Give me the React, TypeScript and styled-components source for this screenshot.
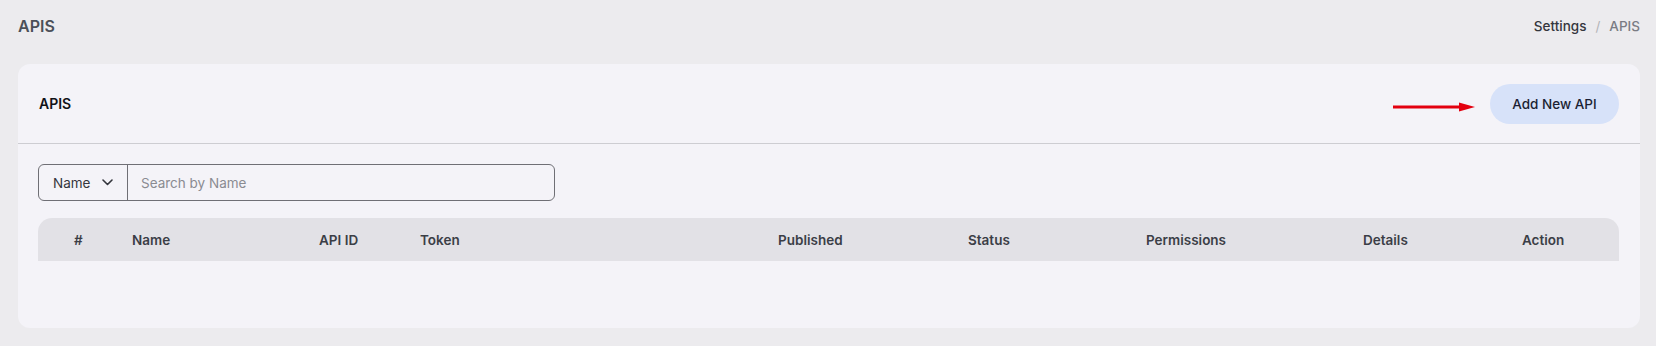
import React from 'react';
import styled, { createGlobalStyle } from 'styled-components';

const GlobalStyle = createGlobalStyle`
  html, body {
    margin: 0;
    padding: 0;
    background: #ecebee;
    font-family: Inter, "Noto Sans", "Liberation Sans", sans-serif;
  }
  * { box-sizing: border-box; }
`;

const Page = styled.div`
  padding: 0 16px 0 18px;
  height: 346px;
  display: flex;
  flex-direction: column;
`;

const TopBar = styled.div`
  height: 52px;
  margin-bottom: 12px;
  display: flex;
  align-items: center;
  justify-content: space-between;
`;

const PageTitle = styled.h1`
  margin: 0;
  font-size: 16px;
  font-weight: 600;
  color: #4b4f58;
`;

const Crumbs = styled.div`
  display: flex;
  align-items: center;
  gap: 9px;
  font-size: 13.5px;
`;

const Crumb = styled.span<{ $active?: boolean }>`
  color: ${(p) => (p.$active ? '#7a7c84' : '#34363d')};
  font-weight: 500;
`;

const Slash = styled.span`
  color: #b3b3b8;
`;

const Card = styled.div`
  background: #f4f3f8;
  border-radius: 12px;
  height: 264px;
  display: flex;
  flex-direction: column;
`;

const CardHeader = styled.div`
  height: 80px;
  padding: 0 21px;
  border-bottom: 1px solid #cdcdd2;
  display: flex;
  align-items: center;
  justify-content: space-between;
`;

const CardTitle = styled.h2`
  margin: 0;
  font-size: 14px;
  font-weight: 600;
  color: #111217;
`;

const Actions = styled.div`
  display: flex;
  align-items: center;
  gap: 15px;
`;

const Arrow = styled.svg`
  margin-top: 6px;
`;

const AddButton = styled.button`
  width: 129px;
  height: 40px;
  border: none;
  border-radius: 20px;
  background: #d7e2f9;
  color: #1b1f33;
  font-family: inherit;
  font-size: 13.5px;
  font-weight: 500;
  cursor: pointer;
`;

const CardBody = styled.div`
  padding: 20px 21px 0 20px;
`;

const SearchBox = styled.div`
  width: 517px;
  height: 37px;
  border: 1px solid #6f6f75;
  border-radius: 6px;
  display: flex;
  align-items: stretch;
`;

const FieldSelect = styled.div`
  width: 89px;
  border-right: 1px solid #6f6f75;
  display: flex;
  align-items: center;
  justify-content: space-between;
  padding: 0 14px 0 14px;
  font-size: 13.5px;
  color: #34363d;
`;

const SearchInput = styled.input`
  flex: 1;
  border: none;
  background: transparent;
  padding: 0 13px;
  font-family: inherit;
  font-size: 13.5px;
  color: #333;
  outline: none;
  &::placeholder {
    color: #8a8b92;
  }
`;

const TableHead = styled.div`
  margin-top: 17px;
  height: 43px;
  background: #e2e1e6;
  border-radius: 14px 14px 0 0;
  padding-left: 36px;
  display: grid;
  grid-template-columns: 58px 187px 101px 358px 190px 178px 217px 159px 1fr;
  align-items: center;
`;

const HeadCell = styled.div`
  font-size: 13.5px;
  font-weight: 600;
  color: #3b3e46;
  white-space: nowrap;
`;

const columns = ['#', 'Name', 'API ID', 'Token', 'Published', 'Status', 'Permissions', 'Details', 'Action'];

function App() {
  return (
    <>
      <GlobalStyle />
      <Page>
        <TopBar>
          <PageTitle>APIS</PageTitle>
          <Crumbs>
            <Crumb>Settings</Crumb>
            <Slash>/</Slash>
            <Crumb $active>APIS</Crumb>
          </Crumbs>
        </TopBar>
        <Card>
          <CardHeader>
            <CardTitle>APIS</CardTitle>
            <Actions>
              <Arrow width="82" height="10" viewBox="0 0 82 10">
                <line x1="0" y1="5" x2="70" y2="5" stroke="#e3000f" strokeWidth="3" />
                <polygon points="66,0.5 82,5 66,9.5" fill="#e3000f" />
              </Arrow>
              <AddButton>Add New API</AddButton>
            </Actions>
          </CardHeader>
          <CardBody>
            <SearchBox>
              <FieldSelect>
                <span>Name</span>
                <svg width="11" height="7" viewBox="0 0 11 7">
                  <path d="M1 1l4.5 4.5L10 1" fill="none" stroke="#34363d" strokeWidth="1.6" strokeLinecap="round" strokeLinejoin="round" />
                </svg>
              </FieldSelect>
              <SearchInput placeholder="Search by Name" />
            </SearchBox>
            <TableHead>
              {columns.map((c) => (
                <HeadCell key={c}>{c}</HeadCell>
              ))}
            </TableHead>
          </CardBody>
        </Card>
      </Page>
    </>
  );
}

export default App;
